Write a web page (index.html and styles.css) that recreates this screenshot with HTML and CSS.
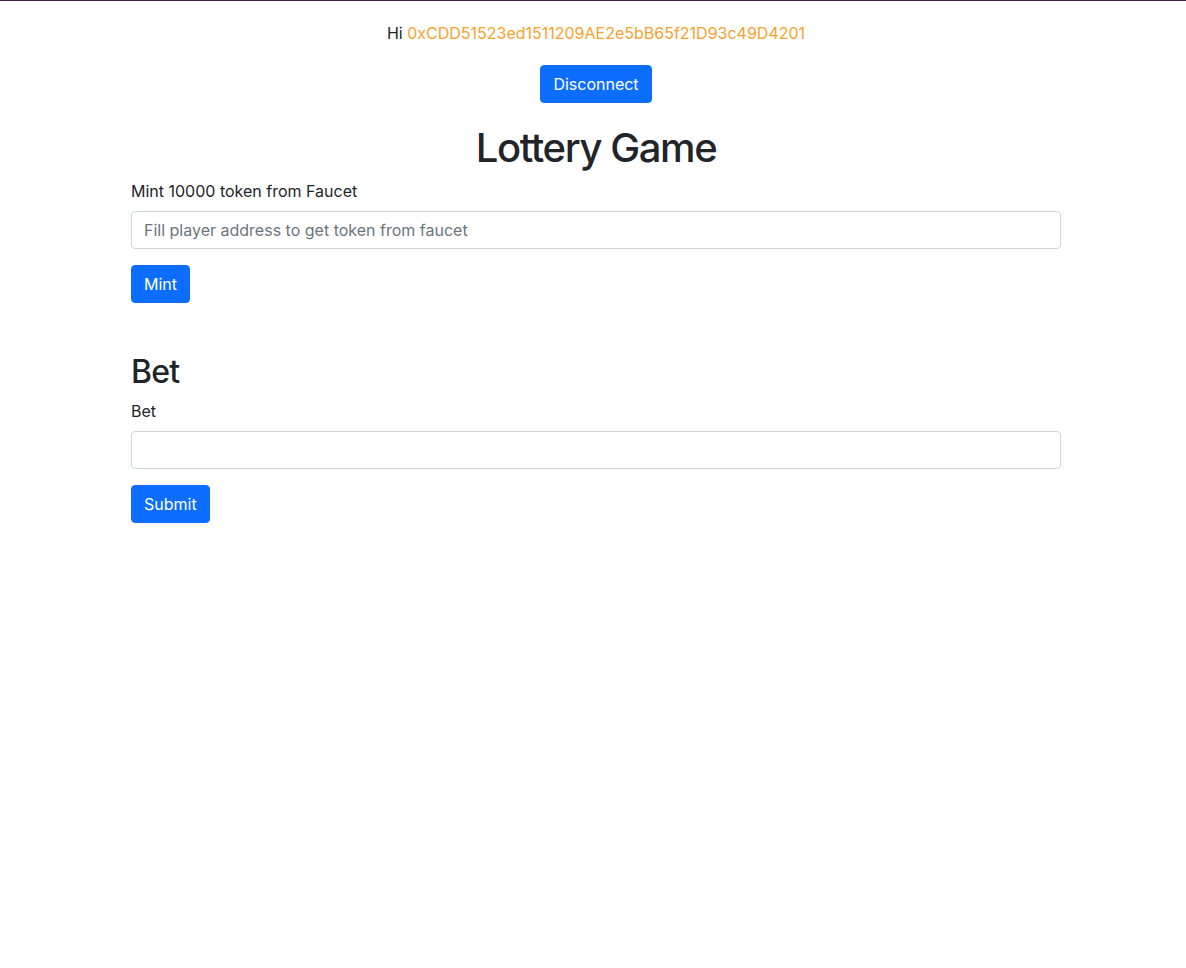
FILE: index.html
```html
<!DOCTYPE html>
<html lang="en">
<head>
<meta charset="utf-8">
<title>Lottery Game</title>
<link rel="stylesheet" href="styles.css">
</head>
<body>
<div class="topline"></div>
<div class="page">
  <header class="account">
    <p class="greeting">Hi <span class="address">0xCDD51523ed1511209AE2e5bB65f21D93c49D4201</span></p>
    <button class="btn">Disconnect</button>
  </header>
  <main class="container">
    <h1 class="title">Lottery Game</h1>
    <section class="block">
      <label class="form-label" for="faucet">Mint 10000 token from Faucet</label>
      <input class="form-control" id="faucet" type="text" placeholder="Fill player address to get token from faucet">
      <button class="btn">Mint</button>
    </section>
    <section class="block bet">
      <h2 class="subtitle">Bet</h2>
      <label class="form-label" for="bet">Bet</label>
      <input class="form-control" id="bet" type="text">
      <button class="btn">Submit</button>
    </section>
  </main>
</div>
</body>
</html>
```
FILE: styles.css
```css
* { box-sizing: border-box; }
html, body { margin: 0; padding: 0; background: #fff; }
body {
  font-family: Inter, "Noto Sans", "Liberation Sans", sans-serif;
  font-size: 16px;
  line-height: 1.5;
  color: #212529;
}
.topline { height: 1px; background: #3f2247; }
.page { padding-left: 6px; }
.account {
  display: flex;
  flex-direction: column;
  align-items: center;
  padding-top: 20px;
}
.greeting { margin: 0 0 20px; }
.address { color: #f9a12d; }
.btn {
  font-family: inherit;
  font-size: 16px;
  line-height: 1.5;
  color: #fff;
  background: #0d6efd;
  border: 1px solid #0d6efd;
  border-radius: 4px;
  padding: 6px 12px;
  cursor: pointer;
}
.container {
  max-width: 930px;
  margin: 0 auto;
}
.title {
  font-size: 40px;
  font-weight: 500;
  line-height: 1.2;
  letter-spacing: -0.035em;
  text-align: center;
  margin: 21px 0 7px;
}
.block { display: flex; flex-direction: column; align-items: flex-start; }
.form-label { display: block; margin-bottom: 8px; }
.form-control {
  width: 100%;
  font-family: inherit;
  font-size: 16px;
  line-height: 1.5;
  color: #212529;
  padding: 6px 12px;
  border: 1px solid #ced4da;
  border-radius: 4px;
  margin: 0 0 16px;
  background: #fff;
}
.form-control::placeholder { color: #6c757d; }
.bet { margin-top: 50px; }
.subtitle {
  font-size: 32px;
  font-weight: 500;
  line-height: 1.2;
  letter-spacing: -0.025em;
  margin: 0 0 8px;
}
```
